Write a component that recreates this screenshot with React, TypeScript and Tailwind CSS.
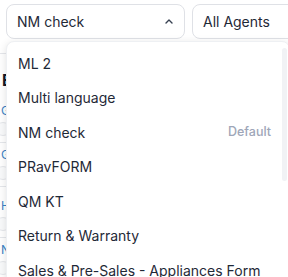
import React from 'react';

const forms = [
  'ML 2',
  'Multi language',
  'NM check',
  'PRavFORM',
  'QM KT',
  'Return & Warranty',
  'Sales & Pre-Sales - Appliances Form',
];

const rows = [
  { label: 'G', top: 'mt-[14px]' },
  { label: 'G', top: 'mt-[5px]' },
  { label: 'H', top: 'mt-[12px]' },
  { label: 'N', top: 'mt-[5px]' },
];

export default function App() {
  return (
    <div className="relative w-[288px] h-[277px] overflow-hidden bg-white font-['Inter',sans-serif] text-[#1f2937]">
      {/* filter bar */}
      <div className="flex gap-[7px] pl-[6px] pt-[4px]">
        <div className="flex items-center justify-between w-[179px] h-[35px] shrink-0 rounded-lg border border-[#dfe1e6] bg-white pl-[10px] pr-[10px] text-[14px]">
          <span>NM check</span>
          <svg width="10" height="6" viewBox="0 0 10 6" fill="none" className="mt-[-2px]">
            <path d="M2 5 L5 2 L8 5" stroke="#374151" strokeWidth="1.4" strokeLinecap="round" strokeLinejoin="round" />
          </svg>
        </div>
        <div className="flex items-center w-[179px] h-[35px] shrink-0 rounded-lg border border-[#dfe1e6] bg-white pl-[10px] text-[14px]">
          <span>All Agents</span>
        </div>
      </div>

      {/* content behind dropdown */}
      <div className="mt-[14px] border-t border-[#e5e7eb]">
        <div className="pt-[16px] pl-[2px] text-[16px] font-bold leading-[20px] text-[#111827]">E</div>
        {rows.map((r, i) => (
          <div key={i} className={`${r.top} border-b border-[#e5e7eb] pb-[6px]`}>
            <div className="pl-[1px] text-[12px] leading-[14px] text-[#3b82c4]">{r.label}</div>
            <div className="mt-[4px] ml-[-4px] w-[14px] h-[14px] rounded-full border border-[#e5e7eb] bg-[#f9fafb]" />
          </div>
        ))}
      </div>

      {/* dropdown menu */}
      <div className="absolute left-[6px] top-[41px] w-[284px] h-[250px] rounded-lg bg-white shadow-[0_2px_8px_rgba(0,0,0,0.12)] border border-[#eef0f3]">
        <div className="flex">
          <div className="flex-1 pt-[4px]">
            {forms.map((f) => (
              <div key={f} className="flex items-center justify-between h-[34.5px] pl-[11px] pr-[11px] text-[14px] whitespace-nowrap">
                <span>{f}</span>
                {f === 'NM check' && <span className="text-[12.5px] font-medium text-[#9ea6b8]">Default</span>}
              </div>
            ))}
          </div>
          <div className="w-[7px] pt-[6px]">
            <div className="w-[5px] h-[133px] rounded-[3px] bg-[#f1f2f5]" />
          </div>
        </div>
      </div>
    </div>
  );
}
